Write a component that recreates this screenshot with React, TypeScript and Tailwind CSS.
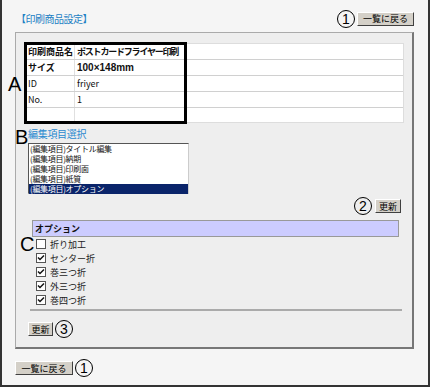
import React from 'react';

const jp = "font-['Noto_Sans_CJK_JP','Noto_Sans',sans-serif]";

function Btn({ children, w }: { children: React.ReactNode; w: string }) {
  return (
    <button
      className={`${w} h-[14px] flex items-center justify-center bg-[#d4d0c8] border border-t-white border-l-white border-r-[#404040] border-b-[#404040] text-[9px] leading-none text-black ${jp}`}
    >
      {children}
    </button>
  );
}

function Num({ n }: { n: string }) {
  return (
    <span className="w-[18px] h-[18px] rounded-full border-[1.5px] border-black flex items-center justify-center text-[14px] leading-none text-black font-['Liberation_Sans',sans-serif]">
      {n}
    </span>
  );
}

function Check({ on, label }: { on: boolean; label: string }) {
  return (
    <div className="flex items-center gap-[4px] h-[14px]">
      <span className="w-[10px] h-[10px] bg-white border border-[#555] flex items-center justify-center">
        {on && (
          <svg width="8" height="8" viewBox="0 0 8 8">
            <path d="M1 3.5 L3 5.5 L7 1.5" stroke="#111" strokeWidth="1.5" fill="none" />
          </svg>
        )}
      </span>
      <span className={`text-[9px] leading-none text-[#222] ${jp}`}>{label}</span>
    </div>
  );
}

const rows = [
  { k: '印刷商品名', v: 'ポストカードフライヤー印刷', bold: true, h: 'h-[16px]' },
  { k: 'サイズ', v: '100×148mm', bold: true, h: 'h-[16px]' },
  { k: 'ID', v: 'friyer', bold: false, h: 'h-[16px]' },
  { k: 'No.', v: '1', bold: false, h: 'h-[16px]' },
  { k: '', v: '', bold: false, h: 'h-[14px]' },
];

const items = ['(編集項目)タイトル編集', '(編集項目)納期', '(編集項目)印刷面', '(編集項目)紙質', '(編集項目)オプション'];

export default function App() {
  return (
    <div className="relative w-[430px] h-[387px] bg-[#f5f5f5] border-l-2 border-r-2 border-b-2 border-[#333] overflow-hidden">
      {/* header */}
      <div className="flex items-center justify-between pl-[14px] pr-[14px] pt-[7px] h-[30px]">
        <span className={`text-[10px] leading-none tracking-[-0.5px] text-[#1c7fc4] ${jp}`}>【印刷商品設定】</span>
        <div className="flex items-center gap-[2px]">
          <Num n="1" />
          <Btn w="w-[57px]">一覧に戻る</Btn>
        </div>
      </div>

      {/* panel */}
      <div className="ml-[13px] mt-[2px] w-[399px] h-[317px] bg-[#eeeeee] border border-t-[#aaa] border-l-[#aaa] border-r-2 border-b-2 border-r-[#777] border-b-[#777] pt-[10px]">
        <div className="ml-[9px] w-[379px] bg-white border border-[#ddd]">
          {rows.map((r, i) => (
            <div key={i} className={`flex ${r.h} ${i < rows.length - 1 ? 'border-b border-[#d0d0d0]' : ''}`}>
              <div className={`w-[49px] shrink-0 border-r border-[#e0e0e0] pl-[2px] flex items-center text-[9px] leading-none text-[#111] ${r.bold ? 'font-bold' : ''} ${jp}`}>
                {r.k}
              </div>
              <div
                className={`pl-[2px] flex items-center leading-none text-[#111] ${r.bold ? 'font-bold' : ''} ${i === 1 ? "text-[10px] font-['Liberation_Sans',sans-serif]" : i === 0 ? `text-[9px] tracking-[-1.2px] ${jp}` : `text-[9px] ${jp}`}`}
              >
                {r.v}
              </div>
            </div>
          ))}
        </div>

        <div className={`ml-[12px] mt-[6px] text-[10px] leading-none tracking-[-0.3px] text-[#2a8ad0] ${jp}`}>編集項目選択</div>

        <div className="ml-[12px] mt-[4px] w-[161px] h-[51px] bg-white border border-t-[#555] border-l-[#555] border-r-[#ccc] border-b-[#ccc] flex flex-col">
          {items.map((t, i) => (
            <div
              key={i}
              className={`h-[10px] pl-[1px] flex items-center text-[8px] leading-[10px] tracking-[-0.3px] ${i === items.length - 1 ? 'bg-[#0a246a] text-white' : 'text-[#111]'} ${jp}`}
            >
              {t}
            </div>
          ))}
        </div>

        <div className="flex justify-end items-center gap-[3px] mr-[11px] mt-[3px]">
          <Num n="2" />
          <Btn w="w-[26px]">更新</Btn>
        </div>

        <div className="ml-[16px] mt-[5px] w-[367px] h-[17px] bg-[#ccccff] border border-[#999] flex items-center pl-[2px]">
          <span className={`text-[9px] leading-none font-bold text-[#111] ${jp}`}>オプション</span>
        </div>

        <div className="ml-[20px] flex flex-col">
          <Check on={false} label="折り加工" />
          <Check on label="センター折" />
          <Check on label="巻三つ折" />
          <Check on label="外三つ折" />
          <Check on label="巻四つ折" />
        </div>

        <div className="ml-[14px] mt-[2px] w-[372px] border-t-2 border-[#aaa]" />

        <div className="ml-[12px] mt-[9px] flex items-center gap-[2px]">
          <Btn w="w-[25px]">更新</Btn>
          <Num n="3" />
        </div>
      </div>

      <div className="ml-[13px] mt-[10px] flex items-center gap-[2px]">
        <Btn w="w-[58px]">一覧に戻る</Btn>
        <Num n="1" />
      </div>

      {/* annotations */}
      <div className="absolute left-[22px] top-[42px] w-[163px] h-[82px] border-[3px] border-black pointer-events-none" />
      <span className="absolute left-[6px] top-[74px] text-[20px] leading-none text-black font-['Liberation_Sans',sans-serif]">A</span>
      <span className="absolute left-[13px] top-[127px] text-[20px] leading-none text-black font-['Liberation_Sans',sans-serif]">B</span>
      <span className="absolute left-[18px] top-[234px] text-[20px] leading-none text-black font-['Liberation_Sans',sans-serif]">C</span>
    </div>
  );
}
